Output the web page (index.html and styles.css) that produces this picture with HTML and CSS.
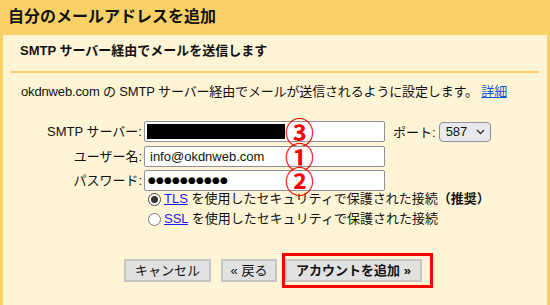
FILE: index.html
```html
<!DOCTYPE html>
<html lang="ja">
<head>
<meta charset="utf-8">
<link rel="stylesheet" href="styles.css">
</head>
<body>
<div class="header">自分のメールアドレスを追加</div>
<div class="panel">
  <div class="subhead">SMTP サーバー経由でメールを送信します</div>
  <p class="desc">okdnweb.com の SMTP サーバー経由でメールが送信されるように設定します。 <a href="#" class="link">詳細</a></p>
  <div class="form">
    <label class="lbl">SMTP サーバー:</label>
    <div class="field">
      <div class="input"><span class="redact"></span></div>
      <span class="mark">③</span>
      <span class="port-lbl">ポート:</span>
      <div class="select">587 <svg class="chev" width="9" height="6" viewBox="0 0 9 6"><path d="M1 1l3.5 3.5L8 1" fill="none" stroke="#333" stroke-width="1.3"/></svg></div>
    </div>
    <label class="lbl">ユーザー名:</label>
    <div class="field">
      <div class="input">info@okdnweb.com</div>
      <span class="mark">①</span>
    </div>
    <label class="lbl">パスワード:</label>
    <div class="field">
      <div class="input dots"><span>●</span><span>●</span><span>●</span><span>●</span><span>●</span><span>●</span><span>●</span><span>●</span><span>●</span><span>●</span></div>
      <span class="mark">②</span>
    </div>
  </div>
  <div class="radios">
    <div class="radio-row"><span class="radio checked"></span><span class="rtext"><a href="#" class="link tls">TLS</a> を使用したセキュリティで保護された接続<b>（推奨）</b></span></div>
    <div class="radio-row"><span class="radio"></span><span class="rtext"><a href="#" class="link tls">SSL</a> を使用したセキュリティで保護された接続</span></div>
  </div>
  <div class="buttons">
    <button class="btn cancel">キャンセル</button>
    <button class="btn back">« 戻る</button>
    <div class="btn-wrap">
      <button class="btn primary">アカウントを追加 »</button>
      <span class="highlight"></span>
    </div>
  </div>
</div>
</body>
</html>
```

FILE: styles.css
```css
html, body {
  margin: 0;
  padding: 0;
  height: 305px;
  overflow: hidden;
}
body {
  font-family: Arial, "Liberation Sans", "Noto Sans CJK JP", sans-serif;
  font-size: 13px;
  color: #111;
  background: #fff5d6;
}
.header {
  height: 35px;
  box-sizing: border-box;
  background: #f9d166;
  padding: 6px 0 0 8px;
  font-size: 16px;
  font-weight: bold;
  line-height: 22px;
  color: #111;
}
.panel {
  height: 270px;
  box-sizing: border-box;
  border-left: 3px solid #f9d166;
  border-right: 3px solid #f9d166;
  background: #fff5d6;
}
.subhead {
  margin: 0 8px;
  padding: 8px 0 12px 9px;
  line-height: 16px;
  font-weight: bold;
  border-bottom: 2px solid #f9d166;
}
.desc {
  margin: 11px 0 0 18px;
  line-height: 16px;
  letter-spacing: -0.15px;
}
.link {
  color: #0b57d0;
  text-decoration: underline;
}
.tls {
  color: #1a1aff;
}
.form {
  margin-top: 21px;
  display: grid;
  grid-template-columns: 139px auto;
  column-gap: 2px;
  row-gap: 3.5px;
}
.lbl {
  text-align: right;
  line-height: 21px;
  height: 21px;
}
.field {
  position: relative;
  display: flex;
  align-items: center;
  height: 21px;
}
.input {
  width: 241px;
  height: 21px;
  box-sizing: border-box;
  background: #fff;
  border: 1px solid #8f8f9d;
  border-radius: 2px;
  padding: 0 5px;
  line-height: 19px;
  font-size: 13px;
  display: flex;
  align-items: center;
}
.redact {
  display: block;
  width: 138px;
  height: 15px;
  background: #000;
  margin-left: -3px;
}
.dots {
  padding-left: 3px;
  font-family: "DejaVu Sans", sans-serif;
}
.dots span {
  display: inline-block;
  width: 8px;
  text-align: center;
  font-size: 9px;
  line-height: 19px;
  color: #000;
}
.mark {
  position: absolute;
  left: 141px;
  top: -5px;
  color: #f00;
  font-size: 29px;
  font-weight: bold;
  line-height: 30px;
  font-family: "Noto Sans CJK JP", sans-serif;
}
.port-lbl {
  margin-left: 8px;
}
.select {
  margin-left: 3px;
  width: 52px;
  height: 20px;
  box-sizing: border-box;
  border: 1px solid #8f8f9d;
  border-radius: 4px;
  background: #e9e9ed;
  display: flex;
  align-items: center;
  padding-left: 6px;
  gap: 9px;
}
.radios {
  margin-left: 145px;
  display: flex;
  flex-direction: column;
  gap: 4px;
}
.radio-row {
  display: flex;
  align-items: center;
  line-height: 16px;
  height: 16px;
}
.radio {
  width: 11px;
  height: 11px;
  border: 1px solid #767676;
  border-radius: 50%;
  background: #fff;
  margin-right: 3px;
  box-sizing: content-box;
  position: relative;
  flex: none;
}
.radio.checked {
  border-color: #444;
}
.radio.checked::after {
  content: "";
  position: absolute;
  left: 2px;
  top: 2px;
  width: 7px;
  height: 7px;
  border-radius: 50%;
  background: #333;
}
.rtext {
  white-space: nowrap;
}
.buttons {
  margin-top: 32px;
  display: flex;
  padding-left: 121px;
}
.btn {
  height: 23px;
  box-sizing: border-box;
  font-family: inherit;
  font-size: 13px;
  background: #e1e1e1;
  border: 2px solid #c6c6c6;
  color: #111;
  padding: 0;
  line-height: 19px;
  white-space: nowrap;
  text-align: center;
}
.cancel {
  width: 87px;
}
.back {
  width: 56px;
  margin-left: 10px;
}
.btn-wrap {
  position: relative;
  margin-left: 8px;
  display: flex;
}
.primary {
  font-weight: bold;
  width: 137px;
}
.highlight {
  position: absolute;
  left: -3px;
  top: -6px;
  width: 151px;
  height: 35px;
  box-sizing: border-box;
  border: 3px solid #f00;
}
```
